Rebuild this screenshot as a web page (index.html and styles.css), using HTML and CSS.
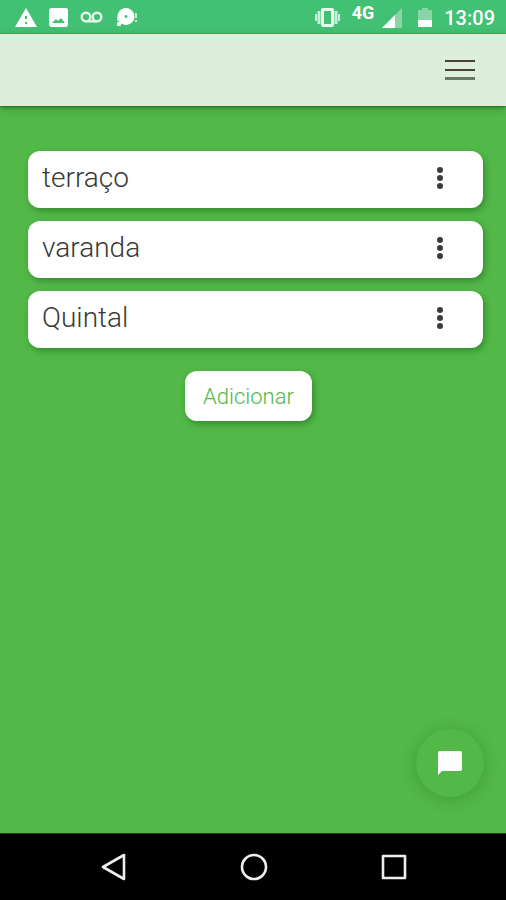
FILE: index.html
```html
<!DOCTYPE html>
<html lang="pt-BR">
<head>
<meta charset="utf-8">
<meta name="viewport" content="width=device-width, initial-scale=1">
<title>Ambientes</title>
<link rel="stylesheet" href="styles.css">
</head>
<body>
<div class="status">
  <div class="status-left">
    <svg width="24" height="20" viewBox="0 0 24 20"><path fill="#fff" fill-rule="evenodd" d="M12 0L23 19H1ZM11 8V11H13V8ZM11 14V16H13V14Z"/></svg>
    <svg width="20" height="20" viewBox="0 0 20 20"><path fill="#fff" fill-rule="evenodd" d="M3 0H17Q19 0 19 3V16Q19 19 17 19H3Q0 19 0 16V3Q0 0 3 0ZM3 15H16L12 10L9 13L7 11Z"/></svg>
    <svg width="24" height="20" viewBox="0 0 24 20" fill="none" stroke="#e3f8ea" stroke-width="2.400"><circle cx="6" cy="9" r="4.300"/><circle cx="17" cy="9" r="4.300"/><path d="M6 13.300H17"/></svg>
    <svg width="24" height="20" viewBox="0 0 24 20"><path fill="#fff" fill-rule="evenodd" d="M11 0A8.500 8.500 0 1 1 10.900 0ZM11 6.900A1.500 1.500 0 1 0 11.100 6.900Z"/><circle cx="4" cy="16" r="2.200" fill="#fff"/><path d="M3 13V10M21 5V10M21 12V14" stroke="#e3f8ea" stroke-width="1.600"/></svg>
  </div>
  <div class="status-right">
    <svg width="26" height="20" viewBox="0 0 26 20"><path fill="#e8faee" fill-rule="evenodd" d="M9 0H18Q20 0 20 2V17Q20 19 18 19H9Q7 19 7 17V2Q7 0 9 0ZM10 3V16H17V3Z"/><path fill="none" stroke="#c8efd6" stroke-width="3" d="M5 3V16M22 3V16"/><path fill="none" stroke="#c8efd6" stroke-width="2" d="M2 6V13M25 6V13"/></svg>
    <span class="network">4G</span>
    <svg class="signal" width="20" height="20" viewBox="0 0 20 20"><path fill="#88d6a6" d="M20 0V20H0Z"/><path fill="#fff" d="M13 7V20H0Z"/></svg>
    <svg class="battery" width="14" height="20" viewBox="0 0 14 20"><path fill="#88d6a6" d="M4 0H10V2H14V19H0V2H4Z"/><path fill="#fff" d="M0 12H14V18Q14 19 13 19H1Q0 19 0 18Z"/></svg>
    <time class="clock">13:09</time>
  </div>
</div>
<header class="topbar">
  <button class="icon-button" type="button" aria-label="Menu">
    <svg width="32" height="22" viewBox="0 0 32 22"><path stroke="#4a4037" stroke-width="2" d="M1 2H31M1 11H31"/><path stroke="#6b7a66" stroke-width="3" d="M1 19.500H31"/></svg>
  </button>
</header>
<main class="content">
  <ul class="places">
    <li class="place"><span class="place-name">terraço</span><button class="icon-button" type="button" aria-label="Opções de terraço"><svg width="8" height="24" viewBox="0 0 8 24" fill="#3d3b36"><circle cx="4" cy="4" r="3"/><circle cx="4" cy="12" r="3"/><circle cx="4" cy="20" r="3"/></svg></button></li>
    <li class="place"><span class="place-name">varanda</span><button class="icon-button" type="button" aria-label="Opções de varanda"><svg width="8" height="24" viewBox="0 0 8 24" fill="#3d3b36"><circle cx="4" cy="4" r="3"/><circle cx="4" cy="12" r="3"/><circle cx="4" cy="20" r="3"/></svg></button></li>
    <li class="place"><span class="place-name">Quintal</span><button class="icon-button" type="button" aria-label="Opções de Quintal"><svg width="8" height="24" viewBox="0 0 8 24" fill="#3d3b36"><circle cx="4" cy="4" r="3"/><circle cx="4" cy="12" r="3"/><circle cx="4" cy="20" r="3"/></svg></button></li>
  </ul>
  <button class="add" type="button">Adicionar</button>
  <button class="chat" type="button" aria-label="Chat">
    <svg width="26" height="26" viewBox="0 0 26 26"><path fill="#fff" d="M3 1H23Q25 1 25 3V19Q25 21 23 21H5L1 25V3Q1 1 3 1Z"/></svg>
  </button>
</main>
<nav class="navbar">
  <button class="icon-button" type="button" aria-label="Voltar"><svg width="28" height="28" viewBox="0 0 28 28" fill="none" stroke="#eee" stroke-width="2.600" stroke-linejoin="round"><path d="M24 2V26L3 14Z"/></svg></button>
  <button class="icon-button" type="button" aria-label="Início"><svg width="28" height="28" viewBox="0 0 28 28" fill="none" stroke="#eee" stroke-width="2.600"><circle cx="14" cy="14" r="12"/></svg></button>
  <button class="icon-button" type="button" aria-label="Recentes"><svg width="28" height="28" viewBox="0 0 28 28" fill="none" stroke="#eee" stroke-width="2.600" stroke-linejoin="round"><path d="M3 3H25V25H3Z"/></svg></button>
</nav>
</body>
</html>
```
FILE: styles.css
```css
* {
  box-sizing: border-box;
}

body {
  margin: 0;
  min-height: 100vh;
  display: flex;
  flex-direction: column;
  background: #52b848;
  font-family: Roboto, "Liberation Sans", sans-serif;
}

svg {
  display: block;
}

button {
  border: 0;
  font: inherit;
  cursor: pointer;
}

.icon-button {
  padding: 0;
  background: none;
}

.status {
  display: flex;
  justify-content: space-between;
  height: 34px;
  padding: 8px 11px 0 14px;
  background: #42c073;
  border-bottom: 1px solid #2dba66;
  color: #fff;
}

.status-left,
.status-right {
  display: flex;
  align-items: flex-start;
}

.status-left {
  gap: 11px;
}

.status-right {
  gap: 12px;
}

.network {
  font-size: 18px;
  line-height: 10px;
  font-weight: 700;
}

.signal {
  margin-left: -4px;
}

.battery {
  margin-left: 4px;
}

.clock {
  font-size: 20px;
  line-height: 20px;
  font-weight: 500;
}

.topbar {
  display: flex;
  align-items: center;
  justify-content: flex-end;
  height: 72px;
  padding: 0 30px;
  background: #ddefda;
  box-shadow: 0 1px 2px rgba(0, 80, 0, 0.6), 0 3px 8px rgba(0, 40, 0, 0.25);
}

.content {
  position: relative;
  flex: 1;
  display: flex;
  flex-direction: column;
  align-items: center;
  padding: 45px 23px 36px 28px;
}

.places {
  display: flex;
  flex-direction: column;
  gap: 13px;
  width: 100%;
  margin: 0 0 23px;
  padding: 0;
  list-style: none;
}

.place {
  display: flex;
  align-items: center;
  justify-content: space-between;
  height: 57px;
  padding: 0 39px 4px 14px;
  border-radius: 12px;
  background: #fff;
  box-shadow: 2px 3px 6px rgba(0, 60, 0, 0.35);
}

.place-name {
  color: #3b3936;
  font-size: 28px;
  line-height: 36px;
  font-weight: 300;
}

.add {
  height: 50px;
  padding: 0 18px;
  margin-right: 14px;
  border-radius: 12px;
  background: #fff;
  box-shadow: 2px 3px 6px rgba(0, 60, 0, 0.35);
  color: #52b848;
  font-size: 22px;
  font-weight: 300;
}

.chat {
  position: absolute;
  right: 22px;
  bottom: 36px;
  display: grid;
  place-items: center;
  width: 68px;
  height: 68px;
  padding: 0;
  border-radius: 50%;
  background: #52b848;
  box-shadow: 0 2px 16px rgba(0, 60, 0, 0.22);
}

.navbar {
  display: flex;
  align-items: center;
  justify-content: space-between;
  height: 67px;
  padding: 0 98px 0 100px;
  border-top: 1px solid #174014;
  background: #000;
}
```
